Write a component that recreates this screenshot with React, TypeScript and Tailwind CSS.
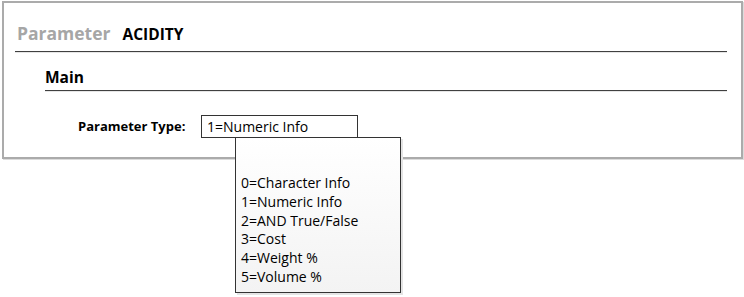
const OPTIONS = [
  '0=Character Info',
  '1=Numeric Info',
  '2=AND True/False',
  '3=Cost',
  '4=Weight %',
  '5=Volume %',
];

export default function App() {
  return (
    <div className="h-[297px] w-[744px] bg-white pl-[2px] pt-[1px] font-['Open_Sans',sans-serif] text-black">
      <div className="h-[158px] w-[741px] border-2 border-[#ababab] bg-white shadow-[1px_1px_0_#dcdcdc]">
        {/* Header */}
        <div className="ml-[11px] mr-[14px] flex h-[49px] items-end border-b border-[#404040] pb-[7px] pl-[2px] shadow-[0_1px_0_#e6e6e6]">
          <div className="flex items-baseline leading-[20px]">
            <span className="text-[17.5px] font-bold text-[#a6a6a6]">Parameter</span>
            <span className="ml-[12px] text-[15.5px] font-bold">ACIDITY</span>
          </div>
        </div>

        {/* Main section */}
        <div className="ml-[41px] mr-[14px] flex h-[39px] items-end border-b border-[#404040] pb-[3px] shadow-[0_1px_0_#e6e6e6]">
          <span className="text-[15.5px] font-bold leading-[20px]">Main</span>
        </div>

        <div className="ml-[74px] mt-[24px] flex items-center">
          <span className="w-[123px] text-[13px] font-bold">Parameter Type:</span>
          <div className="relative">
            <div className="flex h-[23px] w-[157px] items-center border border-[#333] bg-white pl-[5px] text-[14px]">
              1=Numeric Info
            </div>
            <div className="absolute left-[34px] top-[22px] z-10 h-[156px] w-[166px] border border-[#333] bg-gradient-to-b from-white to-[#f3f3f3] pl-[5px] pt-[36px] text-[14px] leading-[18.8px] shadow-[2px_2px_0_#e4e4e4]">
              {OPTIONS.map((o) => (
                <div key={o}>{o}</div>
              ))}
            </div>
          </div>
        </div>
      </div>
    </div>
  );
}
